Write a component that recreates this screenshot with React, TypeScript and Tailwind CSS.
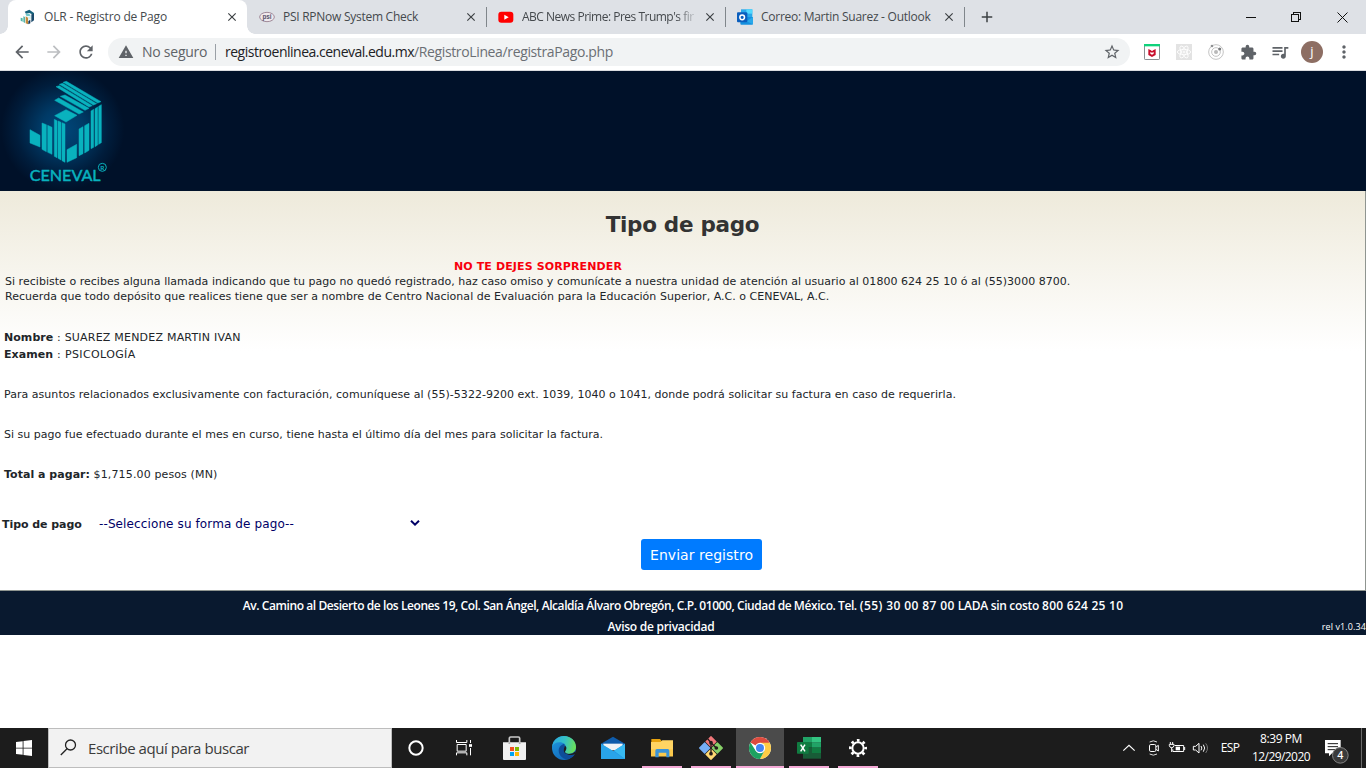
import type { ReactNode } from "react";
import {
  MdAdd,
  MdArrowBack,
  MdArrowForward,
  MdClose,
  MdExtension,
  MdMoreVert,
  MdQueueMusic,
  MdRefresh,
  MdStarBorder,
  MdWarning,
} from "react-icons/md";

/* ---------- Favicons ---------- */

function CenevalFavicon() {
  return (
    <svg width="16" height="16" viewBox="0 0 48 48">
      <path d="M14 8 28 2 42 12V18L28 12 18 14Z" fill="#17627c" />
      <path d="M34 16 42 14V34L34 40Z" fill="#1b4a6b" />
      <path d="M16 14 28 14 32 20 20 22Z" fill="#6fc6c9" />
      <path d="M2 26 8 28V38L2 35ZM10 22 15 24V42L10 39Z" fill="#54b6a9" />
      <path d="M17 22 24 26V46L17 43Z" fill="#c08a3c" />
      <path d="M25 36 31 32V43L25 46Z" fill="#123a5c" />
      <path d="M24 24 33 20V30L25 34Z" fill="#d7efef" />
    </svg>
  );
}

function PsiFavicon() {
  return (
    <svg width="16" height="16" viewBox="0 0 48 48">
      <ellipse cx="24" cy="24" rx="22" ry="14" fill="#f0eaee" stroke="#a08a99" strokeWidth="3" />
      <text x="24" y="30" textAnchor="middle" fontSize="19" fontWeight="700" fontFamily="Liberation Sans, sans-serif" fill="#57516b">
        psi
      </text>
    </svg>
  );
}

function YoutubeFavicon() {
  return (
    <svg width="16" height="16" viewBox="0 0 48 48">
      <rect x="1" y="8" width="45" height="33" rx="9" fill="#f00" />
      <path d="M19 17v15l13-7.500z" fill="#fff" />
    </svg>
  );
}

function OutlookFavicon() {
  return (
    <svg width="16" height="16" viewBox="0 0 48 48">
      <rect x="12" y="1" width="34" height="26" fill="#28a8ea" />
      <rect x="28" y="1" width="18" height="13" fill="#50d9ff" />
      <rect x="12" y="14" width="16" height="13" fill="#0364b8" />
      <path d="M10 24h38v20a3 3 0 0 1-3 3H13a3 3 0 0 1-3-3Z" fill="#1490df" />
      <path d="M48 24 28 37l20 9Z" fill="#28a8ea" />
      <rect x="0" y="10" width="31" height="30" rx="3" fill="#0a5ebd" />
      <circle cx="15.500" cy="25" r="7" fill="none" stroke="#fff" strokeWidth="4.500" />
    </svg>
  );
}

/* ---------- Browser chrome ---------- */

type TabProps = { icon: ReactNode; children: ReactNode; active?: boolean; divider?: boolean; faded?: boolean };

function Tab({ icon, children, active, divider, faded }: TabProps) {
  return (
    <div className={`relative flex h-[34px] w-[239px] items-center pl-3 ${active ? "rounded-t-lg bg-white" : ""}`}>
      {divider && <span className="absolute top-[7px] left-0 h-5 w-px bg-[#80868b]" />}
      {active && (
        <>
          <span className="absolute bottom-0 -left-2 size-2 bg-[radial-gradient(circle_at_0_0,#dee1e6_7.500px,#fff_8px)]" />
          <span className="absolute -right-2 bottom-0 size-2 bg-[radial-gradient(circle_at_100%_0,#dee1e6_7.500px,#fff_8px)]" />
        </>
      )}
      <span className="mr-2 shrink-0">{icon}</span>
      <span className={`w-[174px] whitespace-nowrap text-xs text-[#45494d] ${faded ? "[mask-image:linear-gradient(to_right,#000_155px,transparent_176px)]" : ""}`}>
        {children}
      </span>
      <MdClose className="ml-[7px] size-[14px] shrink-0 text-[#3c4043]" />
    </div>
  );
}

function TabStrip() {
  return (
    <div className="flex h-[34px] items-center bg-[#dee1e6] pl-2">
      <Tab active icon={<CenevalFavicon />}>
        <span className="tracking-[-0.175px]">OLR - Registro de Pago</span>
      </Tab>
      <Tab icon={<PsiFavicon />}>
        <span className="tracking-[-0.265px]">PSI RPNow System Check</span>
      </Tab>
      <Tab divider faded icon={<YoutubeFavicon />}>
        <span className="tracking-[-0.5px]">ABC News Prime: Pres Trump's fir</span>
      </Tab>
      <Tab divider icon={<OutlookFavicon />}>
        <span className="tracking-[-0.265px]">Correo: Martin Suarez - Outlook</span>
      </Tab>
      <span className="h-5 w-px bg-[#80868b]" />
      <MdAdd className="ml-[13px] size-[18px] text-[#3c4043]" />
      <div className="ml-auto flex h-[29px] items-center">
        <span className="flex w-[46px] justify-center pr-[2px]">
          <svg width="11" height="11" viewBox="0 0 11 11" stroke="#111" fill="none" shapeRendering="crispEdges">
            <path d="M.5 5.500h10" />
          </svg>
        </span>
        <span className="flex w-[46px] justify-center pr-px">
          <svg width="11" height="11" viewBox="0 0 11 11" stroke="#111" fill="none" shapeRendering="crispEdges">
            <path d="M.5 2.500h7v7h-7zM2.500 2.500v-2h7v7h-2" />
          </svg>
        </span>
        <span className="flex w-[46px] justify-center pr-px">
          <svg width="11" height="11" viewBox="0 0 11 11" stroke="#111" fill="none">
            <path d="M.5.5l10 10M10.500.5l-10 10" />
          </svg>
        </span>
      </div>
    </div>
  );
}

function ToolbarSlot({ children }: { children: ReactNode }) {
  return <span className="flex w-8 items-center justify-center text-[#5f6368]">{children}</span>;
}

function Toolbar() {
  return (
    <div className="flex h-9 items-center bg-white pr-[6px] pl-[6px]">
      <ToolbarSlot>
        <MdArrowBack className="size-5" />
      </ToolbarSlot>
      <ToolbarSlot>
        <MdArrowForward className="size-5 text-[#bcbec1]" />
      </ToolbarSlot>
      <ToolbarSlot>
        <MdRefresh className="size-5" />
      </ToolbarSlot>
      <div className="ml-[6px] flex h-7 w-[1022px] items-center rounded-full bg-[#f1f3f4] pr-[9px] pl-[10px] text-sm whitespace-nowrap text-[#5f6368]">
        <MdWarning className="mr-2 size-4" />
        <span className="w-[73px] tracking-[-0.25px]">No seguro</span>
        <span className="mr-[9px] h-4 w-px bg-[#9aa0a6]" />
        <span className="tracking-[-0.498px] text-[#202124]">registroenlinea.ceneval.edu.mx</span>
        <span className="tracking-[-0.364px] text-[#6b6f74]">/RegistroLinea/registraPago.php</span>
        <MdStarBorder className="ml-auto size-[18px]" />
      </div>
      <div className="ml-[6px] flex">
        <ToolbarSlot>
          <svg width="16" height="16" viewBox="0 0 48 48">
            <rect x="1.500" y="1.500" width="45" height="45" rx="2" fill="#fff" stroke="#8a8f93" strokeWidth="3" />
            <rect width="48" height="7" fill="#0fd27b" />
            <path d="M13 15l11 5 11-5v18l-11 6-11-6Z" fill="#c8102e" />
            <path d="M19 24l5 2 5-2v5l-5 3-5-3Z" fill="#fff" />
            <path d="M21 15h6v4l-3 1.500-3-1.500Z" fill="#fff" />
          </svg>
        </ToolbarSlot>
        <ToolbarSlot>
          <svg width="16" height="16" viewBox="0 0 48 48" fill="none" stroke="#fff" strokeWidth="2.500">
            <rect width="48" height="48" fill="#e3e3e3" stroke="none" />
            <ellipse cx="24" cy="24" rx="20" ry="8" />
            <ellipse cx="24" cy="24" rx="20" ry="8" transform="rotate(60 24 24)" />
            <ellipse cx="24" cy="24" rx="20" ry="8" transform="rotate(120 24 24)" />
            <circle cx="24" cy="24" r="3" />
          </svg>
        </ToolbarSlot>
        <ToolbarSlot>
          <svg width="16" height="16" viewBox="0 0 48 48" fill="none" stroke="#c4c4c4" strokeWidth="3">
            <circle cx="24" cy="24" r="22" />
            <circle cx="24" cy="24" r="13" />
            <circle cx="24" cy="24" r="6" fill="#b9b9b9" stroke="none" />
            <circle cx="35" cy="15" r="4.500" fill="#77797b" stroke="none" />
            <circle cx="12" cy="6" r="4" fill="#8e9092" stroke="none" />
          </svg>
        </ToolbarSlot>
        <ToolbarSlot>
          <MdExtension className="size-[17px]" />
        </ToolbarSlot>
        <ToolbarSlot>
          <MdQueueMusic className="size-5" />
        </ToolbarSlot>
        <ToolbarSlot>
          <span className="flex size-[22px] items-center justify-center rounded-full bg-[#8d6e63] pb-px text-[13px] text-white">j</span>
        </ToolbarSlot>
        <ToolbarSlot>
          <MdMoreVert className="size-5" />
        </ToolbarSlot>
      </div>
    </div>
  );
}

/* ---------- Page ---------- */

function CenevalLogo() {
  return (
    <svg width="130" height="120" viewBox="0 3 390 360" className="block" fill="#09b2be">
      <defs>
        <radialGradient id="glow" gradientUnits="userSpaceOnUse" cx="188" cy="178" r="185">
          <stop offset="0" stopColor="#00477a" />
          <stop offset="0.35" stopColor="#003a66" />
          <stop offset="0.75" stopColor="#001d3c" />
          <stop offset="1" stopColor="#001129" />
        </radialGradient>
      </defs>
      <rect y="3" width="390" height="360" fill="url(#glow)" />
      <g stroke="#09b2be" strokeWidth="1.500">
        <path d="M189 37 199 34 303 95 293 99ZM178 43 188 40 290 101 280 105ZM168 50 178 47 277 107 267 111Z" />
        <path d="M181 79 195 75 267 115 255 121ZM164 91 176 84 250 126 237 132Z" />
        <path d="M164 137 198 119 231 136 198 156Z" />
        <path d="M90 179 120 196V231L90 219Z" />
        <path d="M126 159 139 164V245L126 238ZM143 166 156 172V253L143 247Z" />
        <path d="M163 148 171 152V263L163 259ZM174 153 183 157V270L174 265ZM186 158 195 162V277L186 272Z" />
        <path d="M201 239 230 223V263L201 277Z" />
        <path d="M237 177 249 170V251L237 257ZM254 167 267 160V241L254 249Z" />
        <path d="M273 123 281 118V232L273 236ZM285 116 293 111V225L285 230ZM296 109 304 104V218L296 223Z" />
        <text x="89" y="332" fontSize="48" fontFamily="Lato, sans-serif" textLength="213" lengthAdjust="spacingAndGlyphs">
          CENEVAL
        </text>
      </g>
      <circle cx="307" cy="292" r="12" fill="none" stroke="#09b2be" strokeWidth="3" />
      <text x="307" y="299" fontSize="19" fontWeight="700" fontFamily="Lato, sans-serif" textAnchor="middle">
        R
      </text>
    </svg>
  );
}

function PaymentPage() {
  return (
    <main className="h-[400px] overflow-hidden border-r border-b border-[#8f9590] bg-[linear-gradient(to_bottom,#eeeadb_0,#fff_160px)] font-['DejaVu_Sans',sans-serif] text-[11px] leading-[17px] whitespace-nowrap text-[#212529]">
      <h1 className="mt-5 text-center text-[21.500px] leading-[27px] font-bold tracking-[-0.3px] text-[#333]">Tipo de pago</h1>
      <div className="mt-[21px] pl-[5px] leading-[15px]">
        <p className="w-[1066px] text-center font-bold tracking-[0.12px] text-[#f8000c]">NO TE DEJES SORPRENDER</p>
        <p className="tracking-[0.027px]">
          Si recibiste o recibes alguna llamada indicando que tu pago no quedó registrado, haz caso omiso y comunícate a nuestra
          unidad de atención al usuario al 01800 624 25 10 ó al (55)3000 8700.
        </p>
        <p className="tracking-[0.027px]">
          Recuerda que todo depósito que realices tiene que ser a nombre de Centro Nacional de Evaluación para la Educación
          Superior, A.C. o CENEVAL, A.C.
        </p>
      </div>
      <div className="mt-[25px] pl-1">
        <p className="tracking-[0.213px]">
          <b className="tracking-[0.05px]">Nombre</b> : SUAREZ MENDEZ MARTIN IVAN
        </p>
        <p className="tracking-[0.38px]">
          <b className="tracking-[0.05px]">Examen</b> : PSICOLOGÍA
        </p>
        <p className="mt-[23px] tracking-[0.036px]">
          Para asuntos relacionados exclusivamente con facturación, comuníquese al (55)-5322-9200 ext. 1039, 1040 o 1041, donde
          podrá solicitar su factura en caso de requerirla.
        </p>
        <p className="mt-[23px] tracking-[0.018px]">
          Si su pago fue efectuado durante el mes en curso, tiene hasta el último día del mes para solicitar la factura.
        </p>
        <p className="mt-[23px] tracking-[0.13px]">
          <b className="tracking-[0.03px]">Total a pagar:</b> $1,715.00 pesos (MN)
        </p>
      </div>
      <div className="mt-8 flex h-[17px] items-center pl-[2px]">
        <label className="w-[97px] pt-px font-bold tracking-[-0.05px]">Tipo de pago</label>
        <div className="flex w-[321px] items-center justify-between text-xs tracking-[0.113px] text-[#000066]">
          <span>--Seleccione su forma de pago--</span>
          <svg width="10" height="6" viewBox="0 0 10 6" fill="none" stroke="#000066" strokeWidth="2" className="mb-px">
            <path d="M1 .8 5 4.600 9 .8" />
          </svg>
        </div>
      </div>
      <button className="mt-[7px] ml-[641px] flex h-[31px] w-[121px] items-center justify-center rounded-[3px] bg-[#007bff] text-sm tracking-[0.045px] text-white">
        Enviar registro
      </button>
    </main>
  );
}

function PageFooter() {
  return (
    <footer className="h-11 bg-[#09192f] pt-1 text-xs leading-[21px] font-semibold whitespace-nowrap text-white">
      <p className="flex justify-center gap-[3px]">
        <span className="tracking-[-0.424px]">
          Av. Camino al Desierto de los Leones 19, Col. San Ángel, Alcaldía Álvaro Obregón, C.P. 01000, Ciudad de México. Tel.
        </span>
        <span className="tracking-[0.4px]">(55) 30 00 87 00</span>
        <span className="tracking-[-0.3px]">LADA sin costo</span>
        <span className="tracking-[0.25px]">800 624 25 10</span>
      </p>
      <div className="flex items-center">
        <span className="grow text-center tracking-[-0.266px]">Aviso de privacidad</span>
        <span className="text-[9px] font-medium tracking-[0.1px]">rel v1.0.34</span>
      </div>
    </footer>
  );
}

/* ---------- Taskbar ---------- */

function TaskIcon({ x, open, current, children }: { x: number; open?: boolean; current?: boolean; children: ReactNode }) {
  return (
    <div className={`flex h-10 w-12 flex-col ${current ? "bg-[#4b4b4b]" : ""}`}>
      <svg width="48" height="38" viewBox={`${x} 6 144 114`} className="block">
        {children}
      </svg>
      {open && <span className={`h-[2px] bg-[#f4a9d6] ${current ? "" : "mx-1"}`} />}
    </div>
  );
}

function TaskbarApps() {
  return (
    <>
      <TaskIcon x={6}>
        <circle cx="78" cy="66" r="20" fill="none" stroke="#fff" strokeWidth="6" />
      </TaskIcon>
      <TaskIcon x={150}>
        <g fill="none" stroke="#fff" strokeWidth="3">
          <path d="M199.500 42v7.500h31V42M199.500 88v-7.500h31V88M201.500 55.500h27v20h-27zM241.500 42v9M241.500 66v22" />
          <path d="M237 54.500h9v8h-9z" fill="#fff" stroke="none" />
        </g>
      </TaskIcon>
      <div className="ml-[3px] flex gap-px">
        <TaskIcon x={303}>
          <path d="M358 54V37q0-4 4-4h23q4 0 4 4v17" fill="none" stroke="#c9c9c9" strokeWidth="5" />
          <path d="M339 49h69v50q0 3-3 3h-63q-3 0-3-3Z" fill="#f0f0f0" />
          <path d="M358 49V54M389 49V54" stroke="#a8a8a8" strokeWidth="5" />
          <path d="M360 63h12v12h-12z" fill="#f25022" />
          <path d="M375 63h12v12h-12z" fill="#7fba00" />
          <path d="M360 78h12v12h-12z" fill="#00a4ef" />
          <path d="M375 78h12v12h-12z" fill="#ffb900" />
        </TaskIcon>
        <TaskIcon x={450}>
          <defs>
            <linearGradient id="edgeTop" x1="0" y1="0.3" x2="1" y2="0.5">
              <stop offset="0" stopColor="#2aa9e0" />
              <stop offset="0.5" stopColor="#35c1c6" />
              <stop offset="1" stopColor="#6be056" />
            </linearGradient>
            <linearGradient id="edgeLeft" x1="0" y1="0" x2="0.6" y2="1">
              <stop offset="0" stopColor="#1f9be2" />
              <stop offset="1" stopColor="#1268b8" />
            </linearGradient>
          </defs>
          <circle cx="522" cy="66" r="36" fill="url(#edgeLeft)" />
          <path d="M486 62C489 43 503 30 522 30c21 0 36 15 36 33 0 13-10 20-21 20-8 0-12-3-12-6 0-2 4-4 4-11 0-10-9-17-20-17-12 0-20 6-23 13Z" fill="url(#edgeTop)" />
          <path d="M522 53C511 57 506 65 506 73c0 17 14 29 30 26 9-3 16-9 19-15-15 7-34 1-34-12 0-7 3-8 3-12 0-3-1-6-2-7Z" fill="#0e4d99" />
          <path d="M529 66c0 7-4 9-4 11 0 3 4 7 12 7 8 0 15-3 19-8 0 3 0 6-1 8-8 5-34 5-34-12 0-6 3-9 3-13 3 1 5 4 5 7Z" fill="#1d1d1d" />
        </TaskIcon>
        <TaskIcon x={597}>
          <path d="M633 53 669 32 705 53V60H633Z" fill="#0f5cab" />
          <path d="M640 53h58v20H640Z" fill="#f1f4f6" />
          <path d="M633 53 672 77 633 99Z" fill="#2fb1ee" />
          <path d="M705 53V99H633Z" fill="#2196e3" />
          <path d="M705 53V99L672 74Z" fill="#37b9f1" />
          <path d="M668 74 633 53V99H705Z" fill="#29a4ea" />
        </TaskIcon>
        <TaskIcon x={-6} open>
          <path d="M34 39h26l5 6h34v9H34Z" fill="#e8a30f" />
          <path d="M33 48h29l5-5h32v48H33Z" fill="#ffd463" />
          <path d="M33 70h66v21H33Z" fill="#fbc94c" />
          <path d="M46 94V74q0-5 5-5h32q5 0 5 5v20h-9V80H56v14Z" fill="#3a93d8" />
        </TaskIcon>
        <TaskIcon x={141} open>
          <g transform="rotate(45 213 66)">
            <rect x="187" y="40" width="25" height="25" rx="2" fill="#f0777a" />
            <rect x="214" y="40" width="25" height="25" rx="2" fill="#87d068" />
            <rect x="187" y="67" width="25" height="25" rx="2" fill="#76aef6" />
            <rect x="214" y="67" width="25" height="25" rx="2" fill="#ffd873" />
          </g>
          <path d="M201 36 213 50V84M213 50 228 65" fill="none" stroke="#241a1b" strokeWidth="4" />
          <circle cx="213" cy="50" r="5.500" fill="#241a1b" />
          <circle cx="213" cy="83" r="5.500" fill="#241a1b" />
          <circle cx="229" cy="66" r="5.500" fill="#241a1b" />
        </TaskIcon>
        <TaskIcon x={288} open current>
          <circle cx="360" cy="66" r="33" fill="#fff" />
          <path d="M360 66 331.400 49.500A33 33 0 0 1 388.600 49.500Z" fill="#dd4b3e" />
          <path d="M360 50.500H389.200A33 33 0 0 1 360 99L373.400 73.800Z" fill="#fecc45" />
          <path d="M346.600 73.800 331.400 49.500A33 33 0 0 0 360 99L373.400 73.800Z" fill="#1da261" />
          <circle cx="360" cy="66" r="15.500" fill="#fff" />
          <circle cx="360" cy="66" r="12" fill="#4384f3" />
        </TaskIcon>
        <TaskIcon x={435} open>
          <path d="M489 33h27v17h-27z" fill="#21a366" />
          <path d="M516 33h27v17h-27z" fill="#33c481" />
          <path d="M489 50h27v15h-27z" fill="#107c41" />
          <path d="M516 50h27v15h-27z" fill="#21a366" />
          <path d="M489 65h27v16h-27z" fill="#185c37" />
          <path d="M516 65h27v16h-27z" fill="#107c41" />
          <path d="M489 81h54v17h-54z" fill="#185c37" />
          <rect x="471" y="48" width="35" height="35" rx="2" fill="#107c41" />
          <path d="M482 56l13 20M495 56l-13 20" stroke="#fff" strokeWidth="4.500" />
        </TaskIcon>
        <TaskIcon x={582} open>
          <g fill="none" stroke="#fff">
            <circle cx="654" cy="66" r="17" strokeWidth="6" />
            <circle cx="654" cy="66" r="23" strokeWidth="8" strokeDasharray="8 10.060" strokeDashoffset="4" />
          </g>
        </TaskIcon>
      </div>
    </>
  );
}

function Taskbar() {
  return (
    <div className="flex h-10 bg-[#1c1c1c] text-xs text-white">
      <div className="flex w-12 items-center justify-center">
        <svg width="16" height="16" viewBox="0 0 48 48" fill="#fff">
          <path d="M0 6 20 3.500V23H0ZM22.500 3 48 0V23H22.500ZM0 25.500H20V44.500L0 42ZM22.500 25.500H48V48L22.500 45Z" />
        </svg>
      </div>
      <div className="flex w-[344px] items-center border border-[#bdbdbd] bg-[#f2f2f2] pl-[11px] text-[15px] tracking-[-0.439px] text-[#3b3b3b]">
        <svg width="17" height="17" viewBox="0 0 17 17" fill="none" stroke="#222" strokeWidth="1.300" className="mr-[11px] -mt-[2px]">
          <circle cx="10.500" cy="6" r="5" />
          <path d="M7 9.700.8 16" />
        </svg>
        Escribe aquí para buscar
      </div>
      <TaskbarApps />
      <div className="ml-auto flex">
        <svg width="90" height="40" viewBox="60 6 270 120" fill="none" stroke="#fff" strokeWidth="3" className="mr-[9px]">
          <path d="M70 74 87 58 104 74" strokeWidth="3.500" />
          <path d="M149 48q11-7 22 0M149 84q11 7 22 0" stroke="#ddd" />
          <rect x="148.500" y="55.500" width="19" height="21" rx="4" />
          <path d="M168 63l7-5v17l-7-5" />
          <path d="M224 58.500h27v18H218.500V70M254 63v9" />
          <path d="M227 62h13v11h-13z" fill="#fff" stroke="none" />
          <path d="M211 48v7M218 48v7M208 55h14v4q-1 6-7 6t-7-6ZM215 65v13" />
          <path d="M280 61h7l10-9v29l-10-9h-7Z" />
          <path d="M303 60q5 6 0 13" />
          <path d="M310 56q8 10 0 21" />
          <path d="M317 52q11 14 0 29" stroke="#777" />
        </svg>
        <span className="flex w-[20px] items-center justify-center pl-[2px] tracking-[-0.7px]">ESP</span>
        <div className="ml-[13px] flex w-[58px] flex-col items-center pt-[2px] leading-[18px] whitespace-nowrap">
          <span className="tracking-[-0.411px]">8:39 PM</span>
          <span className="tracking-[-0.57px]">12/29/2020</span>
        </div>
        <svg width="56" height="40" viewBox="630 6 168 120" className="block">
          <path d="M675 42h47v40h-26l-9 9v-9h-12Z" fill="#fff" />
          <path d="M683 53h31M683 62h31M683 71h22" stroke="#1c1c1c" strokeWidth="3" />
          <circle cx="721" cy="88" r="23.500" fill="#3b3b3b" stroke="#858585" strokeWidth="3" />
          <text x="721" y="99" textAnchor="middle" fontSize="32" fontWeight="600" fill="#fff">
            4
          </text>
          <path d="M784.500 6v120" stroke="#6a6a6a" strokeWidth="3" />
        </svg>
      </div>
    </div>
  );
}

export default function App() {
  return (
    <div className="flex h-screen w-full flex-col overflow-hidden bg-white font-['Open_Sans',sans-serif]">
      <TabStrip />
      <Toolbar />
      <header className="h-[121px] shrink-0 border-t border-[#dadce0] bg-[#001129]">
        <CenevalLogo />
      </header>
      <PaymentPage />
      <PageFooter />
      <div className="grow" />
      <Taskbar />
    </div>
  );
}
